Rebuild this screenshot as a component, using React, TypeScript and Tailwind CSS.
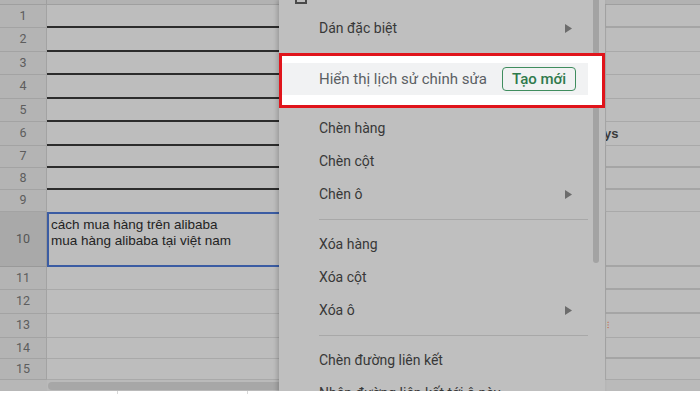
import React from 'react'

type Line = 'k' | 'g' | 'none'

const lineClass: Record<Line, string> = {
  k: 'border-b-2 border-[#2c2c2c]',
  g: 'border-b border-[#a9a9a9]',
  none: '',
}

const rows: { n: number; h: string; a: Line; r: Line; note?: string; mark?: boolean }[] = [
  { n: 1, h: 'h-[23px]', a: 'k', r: 'k' },
  { n: 2, h: 'h-[24px]', a: 'k', r: 'g' },
  { n: 3, h: 'h-[23px]', a: 'k', r: 'g' },
  { n: 4, h: 'h-[24px]', a: 'k', r: 'g' },
  { n: 5, h: 'h-[23px]', a: 'k', r: 'g' },
  { n: 6, h: 'h-[24px]', a: 'k', r: 'g', note: 'ys' },
  { n: 7, h: 'h-[22px]', a: 'k', r: 'k' },
  { n: 8, h: 'h-[22px]', a: 'k', r: 'k' },
  { n: 9, h: 'h-[22px]', a: 'none', r: 'g' },
  { n: 10, h: 'h-[55px]', a: 'none', r: 'k' },
  { n: 11, h: 'h-[23px]', a: 'g', r: 'k' },
  { n: 12, h: 'h-[24px]', a: 'g', r: 'k' },
  { n: 13, h: 'h-[24px]', a: 'g', r: 'g', mark: true },
  { n: 14, h: 'h-[21px]', a: 'g', r: 'k' },
  { n: 15, h: 'h-[21px]', a: 'g', r: 'g' },
]

function Arrow() {
  return (
    <svg width="7" height="9" viewBox="0 0 7 9" className="shrink-0">
      <polygon points="0,0 7,4.5 0,9" fill="#6c6c6c" />
    </svg>
  )
}

function MenuItem({ label, sub }: { label: string; sub?: boolean }) {
  return (
    <div className="flex h-[33px] shrink-0 items-center justify-between pl-[40px] pr-[33px]">
      <span>{label}</span>
      {sub && <Arrow />}
    </div>
  )
}

function Separator() {
  return (
    <div className="h-[17px] shrink-0 pt-[8px]">
      <div className="ml-[40px] mr-[17px] h-px bg-[#a8a8a8]" />
    </div>
  )
}

export default function App() {
  return (
    <div className="relative h-[394px] w-[700px] overflow-hidden bg-[#bdbdbd] font-['Liberation_Sans',Arial,sans-serif]">
      {/* sheet */}
      <div className="flex flex-col">
        <div className="flex h-[5px] border-b border-[#9f9f9f] bg-[#b2b2b2]">
          <div className="w-[47px] border-r border-[#9f9f9f]" />
        </div>

        {rows.map((row) =>
          row.n === 10 ? (
            <div key={row.n} className={`flex ${row.h}`}>
              <div className="flex w-[47px] items-center justify-center border-r border-b border-[#999] bg-[#a9a9a9] font-['Roboto',sans-serif] text-[12.5px] text-[#555]">
                {row.n}
              </div>
              <div className="w-[232px] border-y-2 border-l-2 border-[#3b5ca3] px-[2px] pt-[3px] text-[13.5px] leading-[16px] text-[#232323]">
                <div>cách mua hàng trên alibaba</div>
                <div>mua hàng alibaba tại việt nam</div>
              </div>
              <div className="flex-1 border-y-2 border-r-2 border-[#3b5ca3]" />
              <div className={`w-[95px] border-l border-[#a5a5a5] ${lineClass[row.r]}`} />
            </div>
          ) : (
            <div key={row.n} className={`flex ${row.h}`}>
              <div className="flex w-[47px] items-center justify-center border-r border-b border-[#a3a3a3] bg-[#b4b4b4] font-['Roboto',sans-serif] text-[12.5px] text-[#5d5d5d]">
                {row.n}
              </div>
              <div className={`w-[232px] ${lineClass[row.a]}`} />
              <div className={`flex-1 ${lineClass[row.a]}`} />
              <div className={`flex w-[95px] items-center overflow-hidden border-l border-[#a5a5a5] ${lineClass[row.r]}`}>
                {row.note && (
                  <span className="-ml-[2px] text-[13px] font-bold text-[#3a3a3a]">{row.note}</span>
                )}
                {row.mark && <span className="ml-[1px] text-[9px] text-[#c4643c]">⁝</span>}
              </div>
            </div>
          )
        )}

        {/* horizontal scrollbar */}
        <div className="flex h-[12px] items-center bg-[#bababa]">
          <div className="h-full w-[47px] bg-[#b7b7b7]" />
          <div className="ml-[1px] h-[8px] w-[360px] rounded-full bg-[#a7a7a7]" />
        </div>
      </div>

      {/* context menu */}
      <div className="absolute left-[279px] top-0 flex h-[394px] w-[326px] flex-col bg-[#bfbfbf] font-['Roboto',sans-serif] text-[14px] text-[#383838] shadow-[-2px_0_4px_rgba(0,0,0,0.18)]">
        <div className="absolute right-[6px] top-0 h-[263px] w-[6px] rounded-b-full bg-[#a3a3a3]" />

        <div className="h-[12px] shrink-0">
          <div className="-mt-[8px] ml-[16px] h-[12px] w-[12px] border-2 border-[#4a4a4a]" />
        </div>
        <MenuItem label="Dán đặc biệt" sub />

        <div className="relative z-10 mt-[8px] h-[55px] shrink-0 border-[3px] border-[#e0141b] bg-white">
          <div className="mr-[14px] mt-[7px] flex h-[32px] items-center bg-[#f1f2f3] pl-[37px] text-[15px] text-[#5b5f63]">
            <span>Hiển thị lịch sử chỉnh sửa</span>
            <span className="ml-[15px] flex h-[24px] items-center rounded-[4px] border-[1.5px] border-[#3f8d5e] px-[9px] text-[15px] font-medium text-[#2f7a4c]">
              Tạo mới
            </span>
          </div>
        </div>

        <div className="h-[4px] shrink-0" />
        <MenuItem label="Chèn hàng" />
        <MenuItem label="Chèn cột" />
        <MenuItem label="Chèn ô" sub />
        <Separator />
        <MenuItem label="Xóa hàng" />
        <MenuItem label="Xóa cột" />
        <MenuItem label="Xóa ô" sub />
        <Separator />
        <MenuItem label="Chèn đường liên kết" />
        <MenuItem label="Nhận đường liên kết tới ô này" />
      </div>

      {/* bottom edge */}
      <div className="absolute bottom-0 left-0 right-0 z-20 flex h-[3px] bg-white">
        <div className="w-[118px] border-r border-[#d8d8d8]" />
        <div className="w-[130px] border-r border-[#d8d8d8]" />
      </div>
    </div>
  )
}
